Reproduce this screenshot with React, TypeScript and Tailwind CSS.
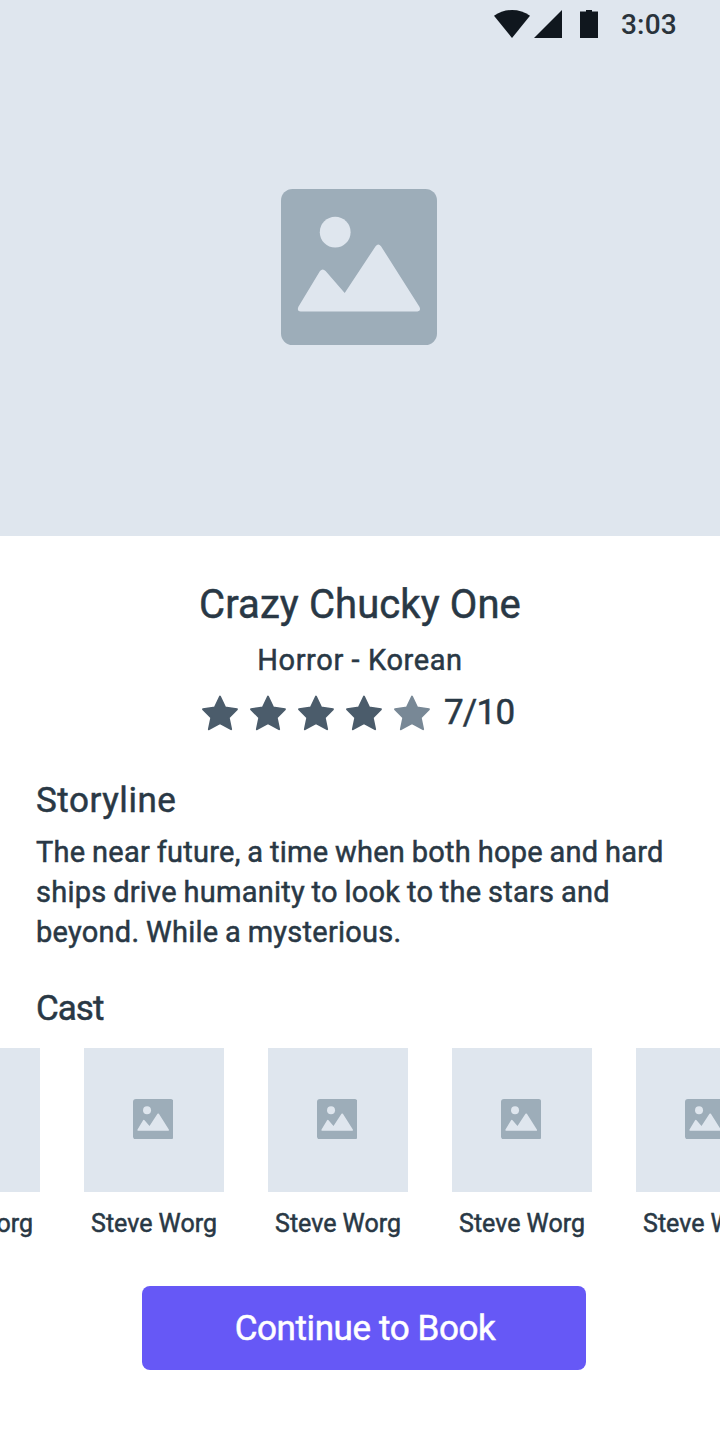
const CAST = ["Steve Worg", "Steve Worg", "Steve Worg", "Steve Worg", "Steve Worg"];
const STARS = [true, true, true, true, false];

function Placeholder({ className }: { className: string }) {
  return (
    <svg viewBox="0 0 156 156" className={className} aria-hidden="true">
      <rect width="156" height="156" rx="11.5" fill="#9DADB9" />
      <circle cx="54.2" cy="43.2" r="15.4" fill="#DFE6EE" />
      <path
        d="M17.4 117.8 L39 82 Q41.6 78.8 44.6 82 L63.7 104 L94.6 57.2 Q97.3 54 100 57.2 L138.4 117.8 Q140.4 122.2 136.4 122.6 H19.6 Q15.6 122.2 17.4 117.8 Z"
        fill="#DFE6EE"
      />
    </svg>
  );
}

function Star({ filled }: { filled: boolean }) {
  const tone = filled ? "#4B5C6B" : "#788896";
  return (
    <svg viewBox="0 0 36 36" className="h-9 w-9" aria-hidden="true">
      <path
        d="M18 1.6 L23.1 12.4 L34.9 14.2 L26.7 22.6 L29.1 34.2 L18 28.2 L6.9 34.2 L9.3 22.6 L1.1 14.2 L12.9 12.4 Z"
        fill={tone}
        stroke={tone}
        strokeWidth="2"
        strokeLinejoin="round"
      />
    </svg>
  );
}

function StatusBar() {
  return (
    <div className="flex h-12 w-full items-center pl-[494px] text-[#10171E]">
      <svg viewBox="0 0 36 28" className="h-7 w-9" fill="currentColor" aria-hidden="true">
        <path d="M0 5.8 Q8 0 18 0 Q28 0 36 5.8 L18 28 Z" />
      </svg>
      <svg viewBox="0 0 28 28" className="ml-1 h-7 w-7" fill="currentColor" aria-hidden="true">
        <path d="M28 0 V28 H0 Z" />
      </svg>
      <svg viewBox="0 0 18 28" className="ml-[18px] h-7 w-[18px]" fill="currentColor" aria-hidden="true">
        <path d="M6 0 H12 V1.6 H18 V28 H0 V1.6 H6 Z" />
      </svg>
      <span className="ml-[23px] pt-[2px] text-[28px] leading-[46px] font-medium tracking-[0.2px] text-[#2A333B]">3:03</span>
    </div>
  );
}

export default function App() {
  return (
    <main className="flex h-[1440px] w-[720px] flex-col overflow-hidden bg-white font-['Roboto',sans-serif] text-[#293845] [-webkit-text-stroke:0.5px_currentColor]">
      <header className="flex h-[536px] shrink-0 flex-col items-center bg-[#DFE6EE] [-webkit-text-stroke:0px]">
        <StatusBar />
        <Placeholder className="mt-[141px] mr-[2px] h-[156px] w-[156px]" />
      </header>

      <section className="mt-[45px] flex flex-col items-center">
        <h1 className="text-[40px] leading-[48px] tracking-[0.1px]">Crazy Chucky One</h1>
        <p className="mt-[11px] text-[29px] leading-10 tracking-[0.6px]">Horror - Korean</p>
        <div className="mt-2 flex h-12 items-center self-start pl-[202px]">
          <div className="mt-[2px] flex gap-3">
            {STARS.map((filled, i) => (
              <Star key={i} filled={filled} />
            ))}
          </div>
          <span className="ml-[14px] pt-[2px] text-[35px] leading-[46px] tracking-[-0.8px]">7/10</span>
        </div>
      </section>

      <section className="mt-[41px] px-9">
        <h2 className="text-[35px] leading-[48px] tracking-[0.55px]">Storyline</h2>
        <p className="mt-[7px] text-[29px] leading-10 tracking-[0.25px] [word-spacing:-0.8px]">
          The near future, a time when both hope and hard
          <br />
          ships drive humanity to look to the stars and
          <br />
          beyond. While a mysterious.
        </p>
      </section>

      <section className="mt-[33px]">
        <h2 className="px-9 text-[35px] leading-[48px] tracking-[-1px]">Cast</h2>
        <ul className="mt-[15px] -ml-[100px] flex w-[876px] gap-11">
          {CAST.map((name, i) => (
            <li key={i} className="w-[140px] shrink-0">
              <div className="h-36 bg-[#DFE6EE] pt-[51px] pl-[49px]">
                <Placeholder className="h-[40.4px] w-[40.4px]" />
              </div>
              <p className="mt-4 text-center text-[25px] leading-8 whitespace-nowrap">{name}</p>
            </li>
          ))}
        </ul>
      </section>

      <button
        type="button"
        className="mt-[46px] ml-[142px] h-[84px] w-[444px] rounded-lg bg-[#6658F6] pt-[2px] pl-[2px] text-[35px] leading-[46px] tracking-[-0.4px] text-white"
      >
        Continue to Book
      </button>
    </main>
  );
}
